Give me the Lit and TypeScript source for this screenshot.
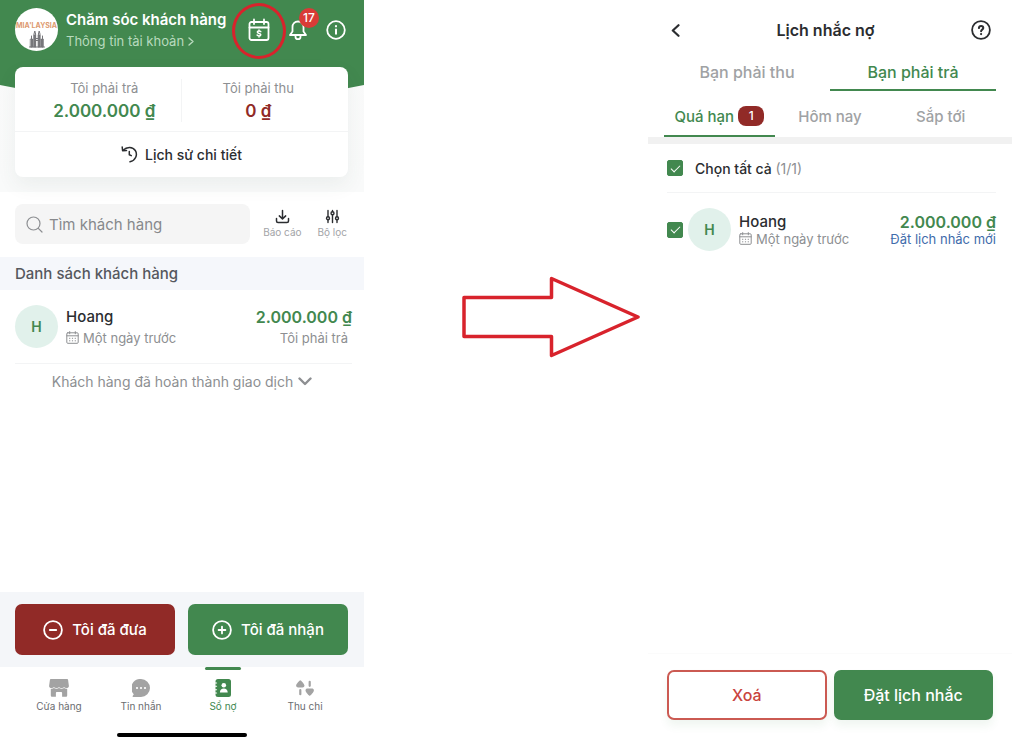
import { LitElement, html, css, svg } from "lit";
import { customElement, property } from "lit/decorators.js";

const palette = css`
  :host {
    --green: #42884f;
    --wine: #912a27;
    --red: #d8232c;
    --ink: #2b2d30;
    --muted: #8d8f92;
    --line: #f3f4f5;
    font-family: Inter, "Liberation Sans", sans-serif;
    color: var(--ink);
  }
  * {
    box-sizing: border-box;
  }
  button,
  input {
    font: inherit;
    color: inherit;
    margin: 0;
    padding: 0;
    border: 0;
    background: none;
  }
  a {
    color: inherit;
    text-decoration: none;
  }
  h1,
  h2,
  p {
    margin: 0;
    font-weight: inherit;
  }
  svg {
    display: block;
    flex: none;
    fill: none;
    stroke: currentColor;
    stroke-linecap: round;
    stroke-linejoin: round;
  }
`;

const icons = {
  calendarMoney: html`<svg width="22" height="24" viewBox="0 0 22 24" stroke-width="1.8" aria-hidden="true">
    <rect x="1.5" y="4" width="19" height="18" rx="2"></rect>
    <path d="M1.5 9.5h19M6 1.5v4.500M16 1.500v4.500"></path>
    <path d="M12.800 13.600c-.4-.5-1-.7-1.800-.7-1 0-1.700.4-1.700 1.200 0 1.700 3.500.9 3.500 2.600 0 .8-.7 1.200-1.800 1.200-.8 0-1.400-.2-1.900-.8M11 12v.8M11 18.100v.8" stroke-width="1.500"></path>
  </svg>`,
  bell: html`<svg width="20" height="22" viewBox="0 0 20 22" stroke-width="1.8" aria-hidden="true">
    <path d="M10 2.500c-3.400 0-5.500 2.400-5.500 5.500v4.500L2 16h16l-2.500-3.500V8c0-3.100-2.100-5.500-5.500-5.500z"></path>
    <path d="M7.500 16.500v1.200a2.500 2.500 0 0 0 5 0v-1.200"></path>
  </svg>`,
  info: html`<svg width="20" height="20" viewBox="0 0 20 20" stroke-width="1.8" aria-hidden="true">
    <circle cx="10" cy="10" r="8.800"></circle>
    <path d="M10 9.500v4.300" stroke-width="2"></path><path d="M10 6.200v.1" stroke-width="2.200"></path>
  </svg>`,
  help: html`<svg width="20" height="20" viewBox="0 0 20 20" stroke-width="1.8" aria-hidden="true">
    <circle cx="10" cy="10" r="8.900"></circle>
    <path d="M7.900 8.100c.1-1.300 1-2 2.200-2s2.200.8 2.200 1.900c0 1.600-2.200 1.700-2.200 3.200" stroke-width="2"></path>
    <path d="M10.100 14v.1" stroke-width="2.200"></path>
  </svg>`,
  chevronRight: html`<svg width="6" height="9" viewBox="0 0 6 9" stroke-width="1.4" aria-hidden="true"><path d="M1 1l4 3.500L1 8"></path></svg>`,
  chevronLeft: html`<svg width="9" height="13" viewBox="0 0 9 13" stroke-width="2.2" aria-hidden="true"><path d="M7.500 1.200L1.800 6.500l5.700 5.300"></path></svg>`,
  chevronDown: html`<svg width="14" height="9" viewBox="0 0 14 9" stroke-width="2.4" aria-hidden="true"><path d="M1.500 1.500L7 7l5.500-5.500"></path></svg>`,
  history: html`<svg width="17" height="17" viewBox="0 0 17 17" stroke-width="1.5" aria-hidden="true">
    <path d="M2 4.200C6 .3 11.800.6 14.300 4.500c2.600 4.200.3 10-5.300 11.300"></path>
    <path d="M1.200 1l.4 3.700 3.900-.2M8.300 5.500v3.200l2 .9"></path>
  </svg>`,
  search: html`<svg width="17" height="17" viewBox="0 0 17 17" stroke-width="1.2" aria-hidden="true">
    <circle cx="7.500" cy="7.500" r="6.500"></circle><path d="M12.300 12.300l3.700 3.700"></path>
  </svg>`,
  download: html`<svg width="15" height="15" viewBox="0 0 15 15" stroke-width="1.5" aria-hidden="true">
    <path d="M7.500 1.500v8.300M4.300 6.900l3.200 3 3.200-3M1.500 9.500v2.500c0 1 .6 1.500 1.500 1.500h9c.9 0 1.500-.5 1.500-1.500V9.500"></path>
  </svg>`,
  filter: html`<svg width="15" height="15" viewBox="0 0 15 15" stroke-width="1.4" aria-hidden="true">
    <path d="M3 1.500v6M3 11v2.500M7.500 1.500v1M7.500 6v7.500M12 1.500v6M12 11v2.500"></path>
    <circle cx="3" cy="9.300" r="1.500"></circle><circle cx="7.500" cy="4.200" r="1.500"></circle><circle cx="12" cy="9.300" r="1.500"></circle>
  </svg>`,
  calendar: html`<svg width="13" height="13" viewBox="0 0 13 13" stroke-width="1" aria-hidden="true">
    <rect x=".8" y="1.800" width="11.400" height="10.500" rx="1"></rect>
    <path d="M.8 4.800h11.400M3.700.6v2.200M9.300.6v2.200"></path>
    <path d="M3.500 7.300h.4M6.300 7.300h.4M9.100 7.300h.4M3.500 9.800h.4M6.300 9.800h.4M9.100 9.800h.4"></path>
  </svg>`,
  minusCircle: html`<svg width="20" height="20" viewBox="0 0 20 20" stroke-width="1.8" aria-hidden="true"><circle cx="10" cy="10" r="8.900"></circle><path d="M6.800 10h6.400"></path></svg>`,
  plusCircle: html`<svg width="20" height="20" viewBox="0 0 20 20" stroke-width="1.8" aria-hidden="true"><circle cx="10" cy="10" r="8.900"></circle><path d="M6.600 10h6.800M10 6.600v6.800"></path></svg>`,
  shop: html`<svg width="20" height="18" viewBox="0 0 20 18" stroke-width="0" aria-hidden="true">
    <path fill="currentColor" d="M2.200 0h15.600c.8 0 1.200.4 1.300 1l.8 6c0 1.400-1.200 2-2.300 2-1.200 0-1.700-.8-2.500-.8S13.700 9 12.500 9 10.800 8.200 10 8.200 8.700 9 7.500 9s-1.700-.8-2.600-.8C4.100 8.200 3.600 9 2.400 9 1.200 9 .1 8.400.1 7l.8-6c.1-.6.500-1 1.300-1z"></path>
    <path fill="currentColor" d="M1.800 9.800c1.400.2 2.300-.2 3.100-.7 1.500.9 3.600.9 5.100 0 1.500.9 3.600.9 5.100 0 .8.500 1.700.9 3.100.7v6.400c0 1-.5 1.600-1.500 1.600h-3.600v-3.700c0-.8-.4-1.200-1.100-1.200H8c-.7 0-1.100.4-1.100 1.200v3.700H3.300c-1 0-1.500-.6-1.500-1.600z"></path>
  </svg>`,
  chat: html`<svg width="18" height="18" viewBox="0 0 18 18" stroke-width="0" aria-hidden="true">
    <path fill="currentColor" d="M9 0a9 9 0 1 1 0 18H1.300c-.8 0-1-.8-.5-1.300l1-1.500A9 9 0 0 1 9 0z"></path>
    <g fill="#fff"><circle cx="5" cy="9" r="1.100"></circle><circle cx="9" cy="9" r="1.100"></circle><circle cx="13" cy="9" r="1.100"></circle></g>
  </svg>`,
  book: html`<svg width="16" height="18" viewBox="0 0 16 18" stroke-width="0" aria-hidden="true">
    <path fill="currentColor" d="M3 0h10.500A2.500 2.500 0 0 1 16 2.500v13a2.500 2.500 0 0 1-2.500 2.500H3A2.500 2.500 0 0 1 .5 15.500v-13A2.500 2.500 0 0 1 3 0z"></path>
    <g fill="#fff"><circle cx="8.800" cy="6.200" r="2.300"></circle><path d="M4.900 13.500c0-2.700 1.700-3.900 3.900-3.900s3.900 1.200 3.900 3.900z"></path></g>
    <path d="M0 4h1.600M0 7.300h1.600M0 10.700h1.600M0 14h1.600" stroke="#fff" stroke-width="1.100"></path>
  </svg>`,
  cashflow: html`<svg width="18" height="18" viewBox="0 0 18 18" stroke-width="0" aria-hidden="true">
    <path fill="currentColor" d="M4.300 1.200c.5 0 4.200 3.700 4.200 5.400 0 1.300-1 1.900-2 1.900H2.100c-1 0-2-.6-2-1.900 0-1.700 3.700-5.400 4.200-5.400zM13.700 16.800c-.5 0-4.200-3.700-4.200-5.400 0-1.300 1-1.900 2-1.900h4.400c1 0 2 .6 2 1.900 0 1.700-3.700 5.400-4.200 5.400z"></path>
    <path d="M4.300 11.200v4M13.700 2.800v4" stroke="currentColor" stroke-width="2.200"></path>
  </svg>`,
};

@customElement("customer-summary")
class CustomerSummary extends LitElement {
  @property() note = "";
  @property({ type: Boolean }) link = false;

  static styles = [
    palette,
    css`
      :host {
        display: flex;
        align-items: center;
        gap: 8px;
        flex: 1;
        min-width: 0;
      }
      .initial {
        flex: none;
        display: grid;
        place-items: center;
        width: 43px;
        height: 43px;
        border-radius: 50%;
        background: #e1f1eb;
        color: var(--green);
        font-size: 14px;
        font-weight: 600;
      }
      .texts {
        flex: 1;
        display: flex;
        flex-direction: column;
        gap: var(--row-gap, 4px);
      }
      .line {
        display: flex;
        justify-content: space-between;
        align-items: center;
        line-height: 18px;
        white-space: nowrap;
      }
      .name {
        font-size: 15px;
        font-weight: 500;
      }
      .amount {
        font-size: 16px;
        font-weight: 600;
        color: var(--green);
      }
      .small {
        font-size: 13px;
        line-height: 16px;
        color: var(--muted);
      }
      .when {
        display: flex;
        align-items: center;
        gap: 4px;
      }
      .note {
        padding-right: 4px;
      }
      .action {
        color: #3f6cab;
      }
    `,
  ];

  render() {
    return html`
      <span class="initial">H</span>
      <div class="texts">
        <div class="line"><span class="name">Hoang</span><span class="amount">2.000.000 ₫</span></div>
        <div class="line small">
          <span class="when">${icons.calendar}Một ngày trước</span>
          ${this.link ? html`<a class="action" href="#">${this.note}</a>` : html`<span class="note">${this.note}</span>`}
        </div>
      </div>
    `;
  }
}

@customElement("debt-book")
class DebtBook extends LitElement {
  static styles = [
    palette,
    css`
      :host {
        display: flex;
        flex-direction: column;
        min-width: 0;
        min-height: 100vh;
      }
      .hero {
        background: linear-gradient(#fbfbfb, #f9fafa);
        padding-bottom: 15px;
      }
      .top {
        display: flex;
        align-items: flex-start;
        gap: 8px;
        height: 120px;
        padding: 8px 18px 0 15px;
        background: var(--green);
        color: #fff;
        clip-path: polygon(0 0, 100% 0, 100% 85px, 50% 100%, 0 85px);
      }
      .logo {
        flex: none;
        display: flex;
        flex-direction: column;
        align-items: center;
        width: 43px;
        height: 43px;
        padding-top: 13px;
        overflow: hidden;
        border-radius: 50%;
        background: #fff;
        color: #77777b;
      }
      .brand {
        font-size: 7px;
        line-height: 9px;
        font-weight: 700;
        color: #dd9a70;
        white-space: nowrap;
      }
      .account {
        flex: 1;
        display: flex;
        flex-direction: column;
        gap: 2px;
        padding-top: 2px;
        white-space: nowrap;
      }
      .title {
        font-size: 15px;
        line-height: 20px;
        font-weight: 600;
      }
      .profile {
        display: flex;
        align-items: center;
        gap: 4px;
        font-size: 13px;
        line-height: 18px;
        color: #b8dabe;
      }
      .tools {
        display: flex;
        align-items: center;
        gap: 18px;
        height: 44px;
      }
      .tool {
        position: relative;
        display: block;
      }
      .ring {
        position: absolute;
        inset: -15px -16px -17px;
        border: 3px solid var(--red);
        border-radius: 50%;
      }
      .count {
        position: absolute;
        left: 11px;
        top: -11px;
        width: 20px;
        height: 20px;
        border-radius: 50%;
        background: #d93b37;
        font-size: 12px;
        line-height: 20px;
        font-weight: 500;
        text-align: center;
      }
      .card {
        position: relative;
        margin: -53px 16px 0 15px;
        border-radius: 8px;
        background: #fff;
        box-shadow: 0 8px 20px rgba(60, 80, 70, 0.07);
      }
      .totals {
        display: grid;
        grid-template-columns: 1fr 1fr;
        padding: 12px 13px 9px;
        border-bottom: 1px solid var(--line);
        text-align: center;
      }
      .total {
        display: flex;
        flex-direction: column;
        gap: 2px;
        color: var(--wine);
      }
      .total.owed {
        border-right: 1px solid var(--line);
        color: var(--green);
      }
      .label {
        font-size: 13px;
        line-height: 19px;
        color: var(--muted);
      }
      .sum {
        font-size: 17px;
        line-height: 22px;
        font-weight: 600;
      }
      .history {
        display: flex;
        justify-content: center;
        align-items: center;
        gap: 7px;
        width: 100%;
        height: 45px;
        font-size: 14px;
        font-weight: 500;
      }
      .finder {
        display: flex;
        align-items: center;
        gap: 13px;
        padding: 12px 17px 13px 15px;
      }
      .search {
        flex: 1;
        min-width: 0;
        display: flex;
        align-items: center;
        gap: 6px;
        height: 40px;
        padding: 0 11px;
        border-radius: 8px;
        background: #f5f5f5;
        color: var(--muted);
      }
      .field {
        flex: 1;
        min-width: 0;
        width: 100%;
        font-size: 15px;
        outline: none;
      }
      .field::placeholder {
        color: #87898c;
        opacity: 1;
      }
      .mini {
        display: flex;
        flex-direction: column;
        align-items: center;
        gap: 1px;
        font-size: 10px;
        line-height: 14px;
        white-space: nowrap;
      }
      .mini-label {
        color: #a2a4a7;
      }
      .minis {
        display: flex;
        gap: 16px;
      }
      .band {
        padding: 0 15px;
        background: #f5f7fb;
        font-size: 15px;
        line-height: 33px;
        font-weight: 500;
        color: #55585e;
      }
      .entry {
        display: flex;
        margin: 0 12px 0 15px;
        padding: 15px 0;
        border-bottom: 1px solid var(--line);
      }
      .done {
        display: flex;
        justify-content: center;
        align-items: center;
        gap: 5px;
        width: 100%;
        height: 35px;
        font-size: 14px;
        color: var(--muted);
        white-space: nowrap;
      }
      .spacer {
        flex: 1;
      }
      .actions {
        display: flex;
        gap: 13px;
        padding: 12px 16px 12px 15px;
        background: #f4f6f9;
      }
      .action {
        flex: 1;
        display: flex;
        justify-content: center;
        align-items: center;
        gap: 9px;
        height: 51px;
        border-radius: 7px;
        color: #fff;
        font-size: 15px;
        font-weight: 500;
        white-space: nowrap;
      }
      .action.gave {
        background: var(--wine);
      }
      .action.got {
        background: var(--green);
      }
      .nav {
        display: grid;
        grid-template-columns: repeat(4, 1fr);
        padding: 0 18px;
      }
      .tab {
        display: flex;
        flex-direction: column;
        align-items: center;
        gap: 1px;
        font-size: 10px;
        line-height: 16px;
        color: #6b6d70;
      }
      .tab svg {
        color: #a3a3a3;
      }
      .tab::before {
        content: "";
        width: 36px;
        height: 3px;
        margin-bottom: 8px;
        border-radius: 2px;
      }
      .tab.current,
      .tab.current svg {
        color: var(--green);
      }
      .tab.current::before {
        background: var(--green);
      }
      .home {
        width: 130px;
        height: 4px;
        margin: 19px auto 8px;
        border-radius: 2px;
        background: #000;
      }
    `,
  ];

  render() {
    const tabs = [
      { icon: icons.shop, label: "Cửa hàng" },
      { icon: icons.chat, label: "Tin nhắn" },
      { icon: icons.book, label: "Sổ nợ", current: true },
      { icon: icons.cashflow, label: "Thu chi" },
    ];
    return html`
      <div class="hero">
        <header class="top">
          <div class="logo">
            <span class="brand">MIA'LAYSIA</span>
            <svg width="16" height="18" viewBox="0 0 16 18" stroke-width="1" aria-hidden="true">
              <path d="M0.500 17h15M2.500 17V6M13.500 17V6M5 17V4l.8-3 .8 3v13M9.400 17V4l.8-3 .8 3v13M6.600 8.500h2.800M6.600 10.500h2.800"></path>
              <path d="M1.500 9h2.500v8H1.500zM12 9h2.500v8H12zM5 5h1.600v12H5zM9.400 5H11v12H9.400z" fill="currentColor" stroke-width=".5"></path>
            </svg>
          </div>
          <div class="account">
            <h1 class="title">Chăm sóc khách hàng</h1>
            <a class="profile" href="#">Thông tin tài khoản ${icons.chevronRight}</a>
          </div>
          <div class="tools">
            <button class="tool" aria-label="Lịch nhắc nợ">${icons.calendarMoney}<span class="ring"></span></button>
            <button class="tool" aria-label="Thông báo">${icons.bell}<span class="count">17</span></button>
            <button class="tool" aria-label="Thông tin">${icons.info}</button>
          </div>
        </header>
        <section class="card">
          <div class="totals">
            <div class="total owed"><span class="label">Tôi phải trả</span><span class="sum">2.000.000 ₫</span></div>
            <div class="total"><span class="label">Tôi phải thu</span><span class="sum">0 ₫</span></div>
          </div>
          <button class="history">${icons.history}Lịch sử chi tiết</button>
        </section>
      </div>
      <div class="finder">
        <label class="search">${icons.search}<input class="field" type="text" placeholder="Tìm khách hàng" aria-label="Tìm khách hàng" /></label>
        <div class="minis">
          <button class="mini">${icons.download}<span class="mini-label">Báo cáo</span></button>
          <button class="mini">${icons.filter}<span class="mini-label">Bộ lọc</span></button>
        </div>
      </div>
      <h2 class="band">Danh sách khách hàng</h2>
      <div class="entry"><customer-summary note="Tôi phải trả"></customer-summary></div>
      <button class="done">Khách hàng đã hoàn thành giao dịch ${icons.chevronDown}</button>
      <div class="spacer"></div>
      <div class="actions">
        <button class="action gave">${icons.minusCircle}Tôi đã đưa</button>
        <button class="action got">${icons.plusCircle}Tôi đã nhận</button>
      </div>
      <nav class="nav">
        ${tabs.map((t) => html`<a class="tab ${t.current ? "current" : ""}" href="#">${t.icon}${t.label}</a>`)}
      </nav>
      <div class="home"></div>
    `;
  }
}

@customElement("debt-reminders")
class DebtReminders extends LitElement {
  static styles = [
    palette,
    css`
      :host {
        display: flex;
        flex-direction: column;
        min-width: 0;
        min-height: 100vh;
      }
      .bar {
        display: flex;
        justify-content: space-between;
        align-items: center;
        height: 60px;
        padding: 0 21px 0 23px;
      }
      .title {
        font-size: 16px;
        font-weight: 600;
      }
      .tabs {
        display: grid;
        grid-template-columns: 1fr 1fr;
        padding: 0 16px;
      }
      .tabs.days {
        grid-template-columns: repeat(3, 1fr);
      }
      .tab {
        display: flex;
        justify-content: center;
        align-items: center;
        gap: 4px;
        height: 31px;
        padding-bottom: 5px;
        border-bottom: 2px solid transparent;
        font-size: 16px;
        font-weight: 500;
        color: #a0a2a4;
        white-space: nowrap;
      }
      .days .tab {
        height: 46px;
        padding: 6px 0 0;
        font-size: 15px;
      }
      .tab.current {
        border-color: var(--green);
        color: var(--green);
      }
      .badge {
        width: 26px;
        border-radius: 8px;
        background: var(--wine);
        color: #fff;
        font-size: 12px;
        line-height: 20px;
        text-align: center;
      }
      .band {
        height: 7px;
        background: #f1f1f1;
      }
      .all {
        display: flex;
        align-items: center;
        gap: 12px;
        height: 49px;
        margin: 0 16px 0 19px;
        border-bottom: 1px solid var(--line);
        font-size: 14px;
        font-weight: 500;
      }
      .ratio {
        font-weight: 400;
        color: var(--muted);
      }
      .check {
        appearance: none;
        flex: none;
        display: grid;
        place-items: center;
        width: 16px;
        height: 16px;
        border: 1px solid var(--green);
        border-radius: 2px;
      }
      .check:checked {
        background: var(--green);
      }
      .check:checked::before {
        content: "";
        width: 8px;
        height: 4px;
        border: solid #fff;
        border-width: 0 0 1px 1px;
        transform: translateY(-1px) rotate(-45deg);
      }
      .entry {
        display: flex;
        align-items: center;
        gap: 5px;
        padding: 15px 16px 15px 19px;
      }
      .entry customer-summary {
        --row-gap: 0px;
      }
      .spacer {
        flex: 1;
      }
      .actions {
        display: grid;
        grid-template-columns: 1fr 1fr;
        gap: 7px;
        padding: 16px 19px 25px;
        border-top: 1px solid #fbfbfb;
      }
      .action {
        height: 50px;
        border-radius: 7px;
        background: var(--green);
        color: #fff;
        font-size: 16px;
        font-weight: 500;
        box-shadow: 0 6px 8px rgba(66, 136, 79, 0.08);
      }
      .action.remove {
        border: 2px solid #cb5a52;
        background: #fff;
        color: #c9443e;
      }
    `,
  ];

  render() {
    return html`
      <header class="bar">
        <button aria-label="Quay lại">${icons.chevronLeft}</button>
        <h1 class="title">Lịch nhắc nợ</h1>
        <button aria-label="Trợ giúp">${icons.help}</button>
      </header>
      <nav class="tabs">
        <button class="tab">Bạn phải thu</button>
        <button class="tab current">Bạn phải trả</button>
      </nav>
      <nav class="tabs days">
        <button class="tab current">Quá hạn <span class="badge">1</span></button>
        <button class="tab">Hôm nay</button>
        <button class="tab">Sắp tới</button>
      </nav>
      <div class="band"></div>
      <label class="all">
        <input class="check" type="checkbox" checked />
        <span>Chọn tất cả <span class="ratio">(1/1)</span></span>
      </label>
      <div class="entry">
        <input class="check" type="checkbox" checked aria-label="Hoang" />
        <customer-summary note="Đặt lịch nhắc mới" link></customer-summary>
      </div>
      <div class="spacer"></div>
      <div class="actions">
        <button class="action remove">Xoá</button>
        <button class="action">Đặt lịch nhắc</button>
      </div>
    `;
  }
}

@customElement("app-root")
class AppRoot extends LitElement {
  static styles = [
    palette,
    css`
      :host {
        display: grid;
        grid-template-columns: minmax(0, 364fr) minmax(0, 284fr) minmax(0, 364fr);
        min-height: 100vh;
        padding-right: 12px;
        box-sizing: border-box;
        background: #fff;
      }
      .step {
        display: flex;
        align-items: flex-start;
        padding: 276px 8px 0 97px;
      }
      .arrow {
        width: 100%;
        height: 82px;
        color: var(--red);
      }
    `,
  ];

  render() {
    return html`
      <debt-book></debt-book>
      <div class="step">
        <svg class="arrow" viewBox="0 0 179 82" stroke-width="3.500" aria-hidden="true">
          ${svg`<path d="M3 21.500h87.500V2.500L177 41 90.500 79.500V60.500H3z"></path>`}
        </svg>
      </div>
      <debt-reminders></debt-reminders>
    `;
  }
}
